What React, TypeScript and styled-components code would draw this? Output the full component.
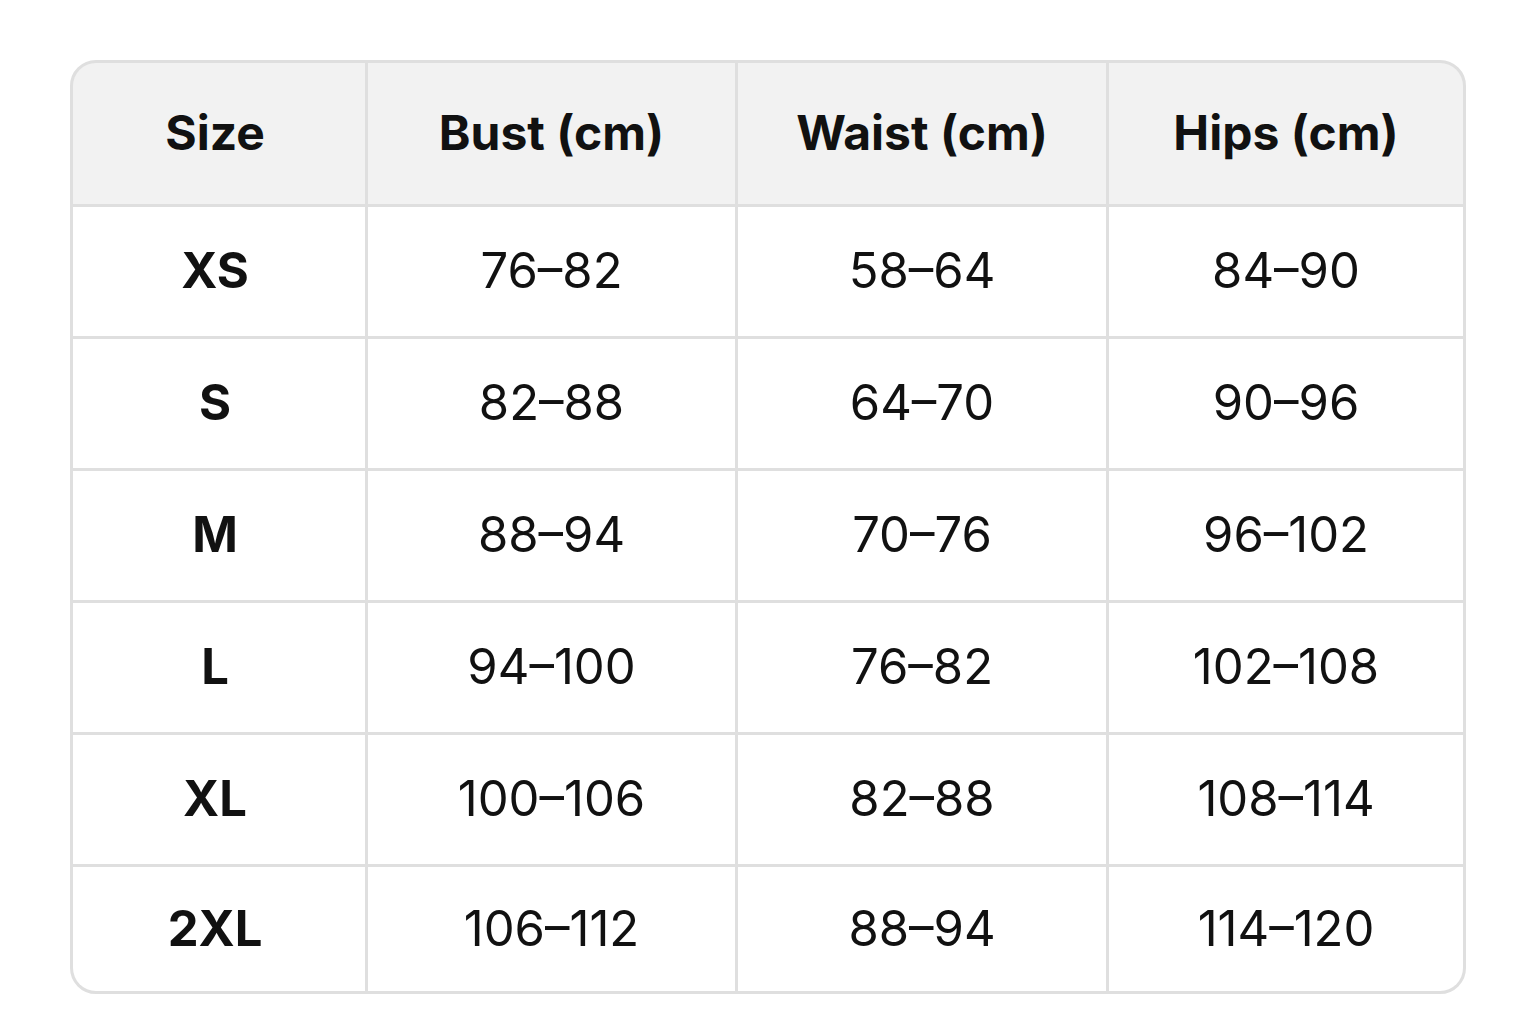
import React from "react";
import styled, { createGlobalStyle } from "styled-components";

const GlobalStyle = createGlobalStyle`
  html, body {
    margin: 0;
    padding: 0;
    background: #ffffff;
  }
  body {
    font-family: Inter, "Liberation Sans", Arial, sans-serif;
    color: #111111;
  }
`;

const Page = styled.div`
  width: 1536px;
  height: 1024px;
  padding: 60px 0 0 70px;
  box-sizing: border-box;
`;

const Table = styled.div`
  display: grid;
  grid-template-columns: 292px 367px 368px 354px;
  grid-template-rows: 141px repeat(5, 129px) 124px;
  gap: 3px;
  width: max-content;
  background: #dfdfdf;
  border: 3px solid #dfdfdf;
  border-radius: 26px;
  overflow: hidden;
`;

const Cell = styled.div<{ $head?: boolean; $bold?: boolean; $first?: boolean }>`
  display: flex;
  align-items: center;
  justify-content: center;
  background: ${(p) => (p.$head ? "#f2f2f2" : "#ffffff")};
  font-size: ${(p) => (p.$head ? "48px" : "49px")};
  font-weight: ${(p) => (p.$head || p.$bold ? 700 : 400)};
  color: #111111;
  padding-right: ${(p) => (p.$first ? "8px" : "0")};
  padding-bottom: 2px;
`;

const headers = ["Size", "Bust (cm)", "Waist (cm)", "Hips (cm)"];

const rows = [
  ["XS", "76–82", "58–64", "84–90"],
  ["S", "82–88", "64–70", "90–96"],
  ["M", "88–94", "70–76", "96–102"],
  ["L", "94–100", "76–82", "102–108"],
  ["XL", "100–106", "82–88", "108–114"],
  ["2XL", "106–112", "88–94", "114–120"],
];

const App = () => {
  return (
    <>
      <GlobalStyle />
      <Page>
        <Table>
          {headers.map((h, i) => (
            <Cell key={h} $head $first={i === 0}>
              {h}
            </Cell>
          ))}
          {rows.map((r) =>
            r.map((v, i) => (
              <Cell key={r[0] + i} $bold={i === 0} $first={i === 0}>
                {v}
              </Cell>
            ))
          )}
        </Table>
      </Page>
    </>
  );
};

export default App;
